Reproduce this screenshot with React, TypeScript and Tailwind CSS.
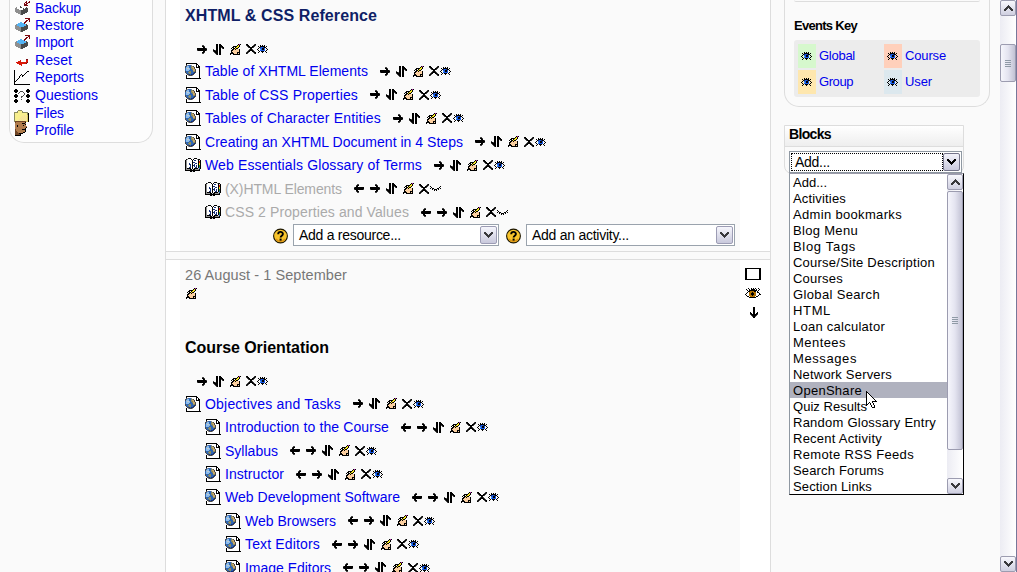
import { useLayoutEffect, useRef, useState } from "react";
import clsx from "clsx";

const PALETTE: Record<string, string> = {
  "#": "#000000",
  k: "#4a4a4a",
  g: "#8f8f8f",
  l: "#c4c8cc",
  w: "#ffffff",
  p: "#fbcfa0",
  o: "#c9a868",
  y: "#f6e420",
  m: "#c02ab8",
  b: "#2f66b4",
  B: "#1858e0",
  c: "#8cbce8",
  s: "#55b4f4",
  d: "#16307a",
  r: "#7c0810",
  R: "#d81808",
  G: "#1c9038",
  n: "#b07c4c",
  N: "#6e4424",
  Y: "#f8ef8e",
  t: "#d8c860",
  a: "#f4dca0",
  e: "#b07000",
  u: "#8a8c60",
};

const ART = {
  right: [
    ".....kk...",
    ".....##k..",
    "......##..",
    "#########k",
    "##########",
    "k########k",
    "......##..",
    ".....##k..",
    ".....kk...",
  ],
  left: [
    "...kk.....",
    "..k##.....",
    "..##......",
    "k#########",
    "##########",
    "k########k",
    "..##......",
    "..k##.....",
    "...kk.....",
  ],
  down: [
    "...##...",
    "...##...",
    "...##...",
    "...##...",
    "...##...",
    "#..##..#",
    "##.##.##",
    "k######k",
    ".k####k.",
    "..k##k..",
    "...##...",
  ],
  updown: [
    "...##.##...",
    "...##.###..",
    "...##.####.",
    "...##.##k##",
    "...##.##.k#",
    "k..##.##...",
    "##k##.##...",
    "k####.##...",
    ".k###.##...",
    "..k##.##...",
    "...k#.##...",
  ],
  edit: [
    "........#m#",
    ".......#y#.",
    "...####yy#.",
    "..##.#yy#..",
    ".#.##y##...",
    "..##p#ppp#.",
    ".##pppppp#.",
    ".#ppppppp#.",
    ".##pppp###.",
    "####ppp#p#.",
    "#..#######.",
  ],
  close: [
    "##......k#",
    "k##....k#k",
    ".k##..##k.",
    "..k####k..",
    "....##....",
    "...k##k...",
    "..k####k..",
    ".k##..##k.",
    "k#k....k##",
    "#k......k#",
  ],
  eye: [
    "...#.#.#...",
    ".#.#####.#.",
    "..#dBBd##..",
    ".#.BB##B.#.",
    "#..sB##B..#",
    ".#.BBBBB.#.",
    "..#.###.#..",
    ".#...#...#.",
  ],
  shut: [
    "#.........#",
    ".#.......#.",
    "#.##...##.#",
    "..#.###.#..",
    "....#.#....",
  ],
  doc: [
    ".###########....",
    ".#wwwwwwwww##...",
    ".kgbbbgwwww#w#..",
    "kbccbbuukww#w##.",
    "kcccbbuookw####.",
    "bcllcbuuokwwww#.",
    "bccccbbuookwww#.",
    "bcccbbbbookwww#.",
    "kbbbuubbuukwww#.",
    "kbbuuubbbdkwww#.",
    ".kbbuubbdkwwww#.",
    "..kkdbddkwwwww#.",
    ".#wgkkkgwwwwww#.",
    ".#wwwwwwwwwwww#.",
    ".#wwwwwwwwwwww#.",
    ".###############",
  ],
  book: [
    "...###...###....",
    ".#gwww#.#wwwg##.",
    "#gwwwww#wddww#l#",
    "#gwwwww#wwwww#R#",
    "#gwwwww#ddwww#R#",
    "#gwwdww#wwddw#y#",
    "#gwwddw#wdwww#y#",
    "#gwwwdw#ddwdw#G#",
    "#gwwwdw#wdwdw#G#",
    "#gwwddw#wwddw#b#",
    "#g####w#w####lb#",
    "#gggg##l##gggg#.",
    "###############.",
    ".....##l##......",
  ],
  big: [
    "...#..#.#.#..#..",
    ".#..#.####.#..#.",
    "..#.########.#..",
    "...##eeee##.#...",
    "..#weee#eeew##..",
    ".#wwee###eewww#.",
    "#wwwee###eewww##",
    ".#wweee#eeeww#..",
    "..##weeeeew##...",
    "....#######.....",
  ],
  backup: [
    "...........r..r",
    "..........rr.rr",
    ".........r.rr..",
    ".........rrr...",
    ".....ww..rrrr..",
    "...wwkwwww.....",
    ".gwwwkkwwwwk...",
    "ggwwwwwwkwkkk..",
    "ggggwwwwkkkkk..",
    "ggggggkkkkkkk..",
    "ggggggkkkkkkk..",
    ".gggggkkkkkk...",
    "...gggkkkk.....",
    ".....gkk.......",
  ],
  restore: [
    "..........rrrrr",
    ".............rr",
    "...........rr.r",
    "..........rr..r",
    ".....ss..rr....",
    "...ssssssr.....",
    ".gsssssssssk...",
    "ggssssssssskk..",
    "ggggssssskkkk..",
    "ggggggkkkkkkk..",
    "ggggggkkkkkkk..",
    ".gggggkkkkkk...",
    "...gggkkkk.....",
    ".....gkk.......",
  ],
  reset: [
    "..........rr",
    "....R.....RR",
    "..RRR.....RR",
    "RRRRRRRRRRRr",
    ".RRRRRRRRRr.",
    "...RRR......",
    ".....R......",
  ],
  reports: [
    "#...............",
    "#............##.",
    "#...........#...",
    "#..........#....",
    "#......#..#.....",
    "#.....#.##......",
    "#....#..#.......",
    "#....#..........",
    "#...#...........",
    "#..#............",
    "#.#.............",
    "##..............",
    "#...............",
    "#...............",
    "################",
  ],
  questions: [
    ".##..........##.",
    "####........####",
    "####..kkk...####",
    ".##..k...k...##.",
    "....k.....k.....",
    ".##.......k..##.",
    "####.....k..####",
    "####...kk...####",
    ".##....k.....##.",
    "................",
    ".##....k.....##.",
    "####........####",
    "####........####",
    ".##..........##.",
  ],
  files: [
    "....uuuu.......",
    "...uYYYYu......",
    "uuuuYYYYuuuuuu.",
    "uYYYYYYYYYYYYu#",
    "uYYYYYYYYYYYYu#",
    "uYYYYYYYYYaYYt#",
    "uYYYYYYYaYaYat#",
    "uYYYYYYaYaYaYt#",
    "uYYYYYaYaYaYat#",
    "uYYYYaYaYaYaYt#",
    "uYYYaYaYaYaYat#",
    "uttttttttttttt#",
  ],
  profile: [
    "NNNNNNNNNNN",
    "Nnnnnnnnnn#",
    "nnnnnnn###n",
    "nnnnnnnnnn#",
    "nn#nnnnn#nn",
    "nn#nnnnnnnnn",
    "nnnnnnnnnnn#",
    "nnnnnnnnnn#",
    "Nnnnnnn####",
    "Nnnnnnnnnn#",
    "NNnnnnnnnn#",
    "NNNnnnnn##.",
    "NNNN####...",
    "NNNNN#.....",
    "######.....",
  ],
  chevDown: ["##.....##", "###...###", ".###.###.", "..#####..", "...###...", "....#...."],
  chevUp: ["....#....", "...###...", "..#####..", ".###.###.", "###...###", "##.....##"],
  cursor: [
    "#..........",
    "##.........",
    "#w#........",
    "#ww#.......",
    "#www#......",
    "#wwww#.....",
    "#wwwww#....",
    "#wwwwww#...",
    "#wwwwwww#..",
    "#wwwwwwww#.",
    "#wwwww#####",
    "#ww#ww#....",
    "#w#.#ww#...",
    "##..#ww#...",
    "#....#ww#..",
    ".....#ww#..",
    "......###..",
  ],
} satisfies Record<string, string[]>;

type ArtName = keyof typeof ART;

function Pixel({ name, className }: { name: ArtName; className?: string }) {
  const rows = ART[name];
  const w = Math.max(...rows.map((r) => r.length));
  return (
    <svg
      width={w}
      height={rows.length}
      viewBox={`0 0 ${w} ${rows.length}`}
      shapeRendering="crispEdges"
      className={clsx("block shrink-0", className)}
      aria-hidden
    >
      {rows.flatMap((row, y) =>
        [...row].map((ch, x) =>
          PALETTE[ch] ? <rect key={`${x}-${y}`} x={x} y={y} width={1} height={1} fill={PALETTE[ch]} /> : null,
        ),
      )}
    </svg>
  );
}

/** Tracks a label in or out so that it fills the given width. */
function Fit({ text, w, className }: { text: string; w: number; className?: string }) {
  const ref = useRef<HTMLSpanElement>(null);
  const [spacing, setSpacing] = useState(0);
  useLayoutEffect(() => {
    if (ref.current) setSpacing((w - ref.current.getBoundingClientRect().width) / text.length);
  }, [text, w]);
  return (
    <span ref={ref} className={clsx("inline-block shrink-0 whitespace-pre", className)} style={{ letterSpacing: `${spacing}px` }}>
      {text}
    </span>
  );
}

function Actions({ back, hidden }: { back?: boolean; hidden?: boolean }) {
  return (
    <div className="flex items-center">
      {back && <Pixel name="left" className="mr-1.5" />}
      <Pixel name="right" className="mr-1.5" />
      <Pixel name="updown" className="mr-1.5" />
      <Pixel name="edit" className="mr-[5px]" />
      <Pixel name="close" className="mr-px" />
      <Pixel name={hidden ? "shut" : "eye"} />
    </div>
  );
}

type Item = { text: string; w: number; level?: number; icon?: ArtName; hidden?: boolean };

const REFERENCE: Item[] = [
  { text: "Table of XHTML Elements", w: 163 },
  { text: "Table of CSS Properties", w: 153 },
  { text: "Tables of Character Entities", w: 176 },
  { text: "Creating an XHTML Document in 4 Steps", w: 258 },
  { text: "Web Essentials Glossary of Terms", w: 217, icon: "book" },
  { text: "(X)HTML Elements", w: 117, level: 1, icon: "book", hidden: true },
  { text: "CSS 2 Properties and Values", w: 184, level: 1, icon: "book", hidden: true },
];

const ORIENTATION: Item[] = [
  { text: "Objectives and Tasks", w: 136 },
  { text: "Introduction to the Course", w: 164, level: 1 },
  { text: "Syllabus", w: 53, level: 1 },
  { text: "Instructor", w: 59, level: 1 },
  { text: "Web Development Software", w: 175, level: 1 },
  { text: "Web Browsers", w: 91, level: 2 },
  { text: "Text Editors", w: 75, level: 2 },
  { text: "Image Editors", w: 86, level: 2 },
];

function ItemRow({ item }: { item: Item }) {
  const level = item.level ?? 0;
  return (
    <li className={clsx("flex h-[23.45px] items-center", level === 1 && "pl-5", level === 2 && "pl-10")}>
      <div className="w-5 shrink-0">
        <Pixel name={item.icon ?? "doc"} />
      </div>
      <Fit text={item.text} w={item.w} className={clsx("mr-3 leading-[22px]", item.hidden ? "text-[#aaaaaa]" : "text-[#0000ee]")} />
      <Actions back={level > 0} hidden={item.hidden} />
    </li>
  );
}

function Help() {
  return (
    <svg width="15" height="16" viewBox="0 0 15 16" className="mt-1 shrink-0">
      <circle cx="7.5" cy="8" r="6.9" fill="#f8c42c" stroke="#1c1600" strokeWidth="1.1" />
      <path d="M3 11a5.6 5.6 0 0 0 9 0" fill="none" stroke="#dd9514" strokeWidth="1.4" />
      <path d="M5.2 6.2c0-3 4.7-3 4.7-.3 0 1.8-2.3 1.7-2.3 3.6" fill="none" stroke="#000" strokeWidth="1.9" />
      <rect x="6.6" y="10.6" width="2" height="2" fill="#000" />
    </svg>
  );
}

function AddSelect({ text, w, className }: { text: string; w: number; className: string }) {
  return (
    <div className={clsx("flex h-[22px] items-center border border-[#9aa3ad] bg-white pr-px pl-[5px]", className)}>
      <Fit text={text} w={w} className="mr-auto leading-[20px]" />
      <div className="flex h-[18px] w-[17px] items-center justify-center rounded-[2px] border border-[#9c9cb4] bg-linear-to-b from-[#f6f6fc] to-[#c9c9dc]">
        <Pixel name="chevDown" className="opacity-75" />
      </div>
    </div>
  );
}

const MENU: { text: string; w: number; icon: ArtName; cls: string }[] = [
  { text: "Backup", w: 46, icon: "backup", cls: "ml-[2px]" },
  { text: "Restore", w: 49, icon: "restore", cls: "ml-[2px]" },
  { text: "Import", w: 38, icon: "restore", cls: "ml-[2px]" },
  { text: "Reset", w: 37, icon: "reset", cls: "ml-[3px] mt-[5px]" },
  { text: "Reports", w: 49, icon: "reports", cls: "ml-px mt-px" },
  { text: "Questions", w: 63, icon: "questions", cls: "ml-px mt-px" },
  { text: "Files", w: 29, icon: "files", cls: "ml-px mt-[6px]" },
  { text: "Profile", w: 39, icon: "profile", cls: "ml-[2px] -mt-[3px]" },
];

const EVENTS = [
  { text: "Global", w: 36, bg: "bg-[#d6f8cd]" },
  { text: "Course", w: 41, bg: "bg-[#ffd0bb]" },
  { text: "Group", w: 34, bg: "bg-[#fee7ae]" },
  { text: "User", w: 27, bg: "bg-[#dce8ee]" },
];

const OPTIONS: [string, number][] = [
  ["Add...", 34],
  ["Activities", 53],
  ["Admin bookmarks", 109],
  ["Blog Menu", 65],
  ["Blog Tags", 63],
  ["Course/Site Description", 142],
  ["Courses", 50],
  ["Global Search", 87],
  ["HTML", 38],
  ["Loan calculator", 92],
  ["Mentees", 53],
  ["Messages", 64],
  ["Network Servers", 99],
  ["OpenShare", 69],
  ["Quiz Results", 74],
  ["Random Glossary Entry", 143],
  ["Recent Activity", 89],
  ["Remote RSS Feeds", 121],
  ["Search Forums", 91],
  ["Section Links", 79],
];

function ScrollButton({ up }: { up?: boolean }) {
  return (
    <div className="flex h-4 w-full shrink-0 items-center justify-center rounded-[2px] border border-[#9c9cb0] bg-linear-to-b from-[#f8f8fd] to-[#cfcfe0]">
      <Pixel name={up ? "chevUp" : "chevDown"} className="opacity-75" />
    </div>
  );
}

function Thumb({ className }: { className: string }) {
  return (
    <div
      className={clsx(
        "flex w-full shrink-0 flex-col items-center justify-center gap-px rounded-[2px] border border-[#9c9cb0] bg-linear-to-r from-[#f6f6fc] via-[#e4e4f0] to-[#c2c2d4]",
        className,
      )}
    >
      {[0, 1, 2, 3].map((i) => (
        <div key={i} className="h-px w-1.5 bg-[#8f9aa6]" />
      ))}
    </div>
  );
}

export default function App() {
  return (
    <div className="flex h-[572px] w-[1017px] overflow-hidden bg-[#fafafa] font-['Liberation_Sans',Arial,sans-serif] text-[14px] text-black">
      <aside className="w-[165px] shrink-0">
        <nav className="ml-[9px] h-[143px] w-[144px] rounded-b-[15px] border border-t-0 border-[#dddddd] bg-[#fdfdfd] pl-[3px]">
          <ul className="flex flex-col">
            {MENU.map((m, i) => (
              <li key={m.text} className={clsx("flex items-center", i === 0 ? "h-[15.9px]" : "h-[17.6px]")}>
                <div className="flex h-0 w-[22px] shrink-0 items-center">
                  <Pixel name={m.icon} className={m.cls} />
                </div>
                <Fit text={m.text} w={m.w} className="leading-[16px] text-[#0000ee]" />
              </li>
            ))}
          </ul>
        </nav>
      </aside>

      <main className="flex w-[606px] shrink-0 flex-col border-x border-[#dddddd]">
        <section className="flex h-[252px] shrink-0 border-b border-[#dddddd] bg-white pl-[14px]">
          <div className="w-[560px] bg-[#fafafa] pl-[5px]">
            <h2 className="h-[39px] text-[16px] leading-[31px] font-bold text-[#0f1f66]">
              <Fit text="XHTML & CSS Reference" w={192} />
            </h2>
            <div className="flex h-[20.7px] items-center pl-3">
              <Actions />
            </div>
            <ul className="h-[164.3px]">
              {REFERENCE.map((item) => (
                <ItemRow key={item.text} item={item} />
              ))}
            </ul>
            <div className="flex pl-[88px]">
              <Help />
              <AddSelect text="Add a resource..." w={102} className="mr-[7px] ml-[5px] w-[206px]" />
              <Help />
              <AddSelect text="Add an activity..." w={97} className="ml-[5px] w-[209px]" />
            </div>
          </div>
        </section>

        <section className="mt-[7px] flex h-[313px] shrink-0 border-t border-[#dddddd] bg-white pl-[14px]">
          <div className="w-[560px] bg-[#fafafa] pl-[5px]">
            <div className="h-[28px] text-[#777777] leading-[30px]">
              <Fit text="26 August - 1 September" w={162} className="text-[14.5px]" />
            </div>
            <Pixel name="edit" className="ml-px" />
            <h2 className="mt-[37px] h-[35px] text-[16px] leading-[24px] font-bold">
              <Fit text="Course Orientation" w={144} />
            </h2>
            <div className="mb-px flex h-[20px] items-center pl-3">
              <Actions />
            </div>
            <ul>
              {ORIENTATION.map((item) => (
                <ItemRow key={item.text} item={item} />
              ))}
            </ul>
          </div>
          <div className="flex flex-col items-start pt-2 pl-[5px]">
            <div className="h-3 w-4 border-2 border-y border-black bg-white" />
            <Pixel name="big" className="mt-2" />
            <Pixel name="down" className="mt-[9px] ml-[5px]" />
          </div>
        </section>
      </main>

      <aside className="w-[229px] shrink-0 pl-[13px]">
        <div className="h-[107px] w-[206px] rounded-b-[15px] border border-t-0 border-[#dddddd] px-[9px]">
          <div className="h-[2px] rounded-b-sm border-b border-[#dddddd]" />
          <h3 className="h-[38px] pt-[14px] text-[13px] leading-[20px] font-bold">
            <Fit text="Events Key" w={63} />
          </h3>
          <div className="grid h-[57px] grid-cols-[86px_86px] grid-rows-[24px_24px] gap-y-[2px] rounded-[3px] bg-[#ececec] pt-1 pl-1">
            {EVENTS.map((e) => (
              <div key={e.text} className="flex items-center">
                <div className={clsx("mr-[3px] flex h-6 w-[18px] items-center pl-[3px]", e.bg)}>
                  <Pixel name="eye" />
                </div>
                <Fit text={e.text} w={e.w} className="text-[13px] leading-6 text-[#0000ee]" />
              </div>
            ))}
          </div>
        </div>

        <div className="relative mt-[18px] h-[49px] w-[180px] rounded-b-lg border border-[#dddddd]">
          <h3 className="h-[21px] border-b border-[#dddddd] bg-linear-to-b from-white to-[#eeeeee] pl-[4px] leading-[17px] font-bold">
            <Fit text="Blocks" w={42} />
          </h3>
          <div className="mt-[4px] ml-[4px] flex h-[22px] w-[173px] border border-[#8f98a2] bg-white p-px">
            <div className="flex flex-1 items-center border border-dotted border-black pl-[3px]">
              <Fit text="Add..." w={35} className="leading-[18px]" />
            </div>
            <div className="flex w-[17px] items-center justify-center rounded-[2px] border border-[#74748a] bg-linear-to-b from-[#f2f2fa] to-[#c9c9dc]">
              <Pixel name="chevDown" />
            </div>
          </div>

          <div className="absolute top-[47px] left-[4px] flex h-[322px] w-[175px] border border-t-[#9a9aa8] border-r-black border-b-black border-l-[#8f98a2] bg-white">
            <ul className="w-[157px]">
              {OPTIONS.map(([text, w]) => (
                <li key={text} className={clsx("flex h-4 items-center pl-[3px] text-[13px]", text === "OpenShare" && "bg-[#b0b2bf]")}>
                  <Fit text={text} w={w} className="pt-0.5 leading-4" />
                </li>
              ))}
            </ul>
            <div className="flex w-4 flex-col bg-linear-to-r from-[#ececf3] to-white">
              <ScrollButton up />
              <Thumb className="mt-px mb-auto h-[259px]" />
              <ScrollButton />
            </div>
            <Pixel name="cursor" className="absolute top-[217px] left-[76px]" />
          </div>
        </div>
      </aside>

      <div className="flex w-[17px] shrink-0 flex-col border-r border-[#77779a] bg-linear-to-r from-[#ececf3] to-white">
        <ScrollButton up />
        <Thumb className="mt-7 mb-auto h-[38px]" />
        <ScrollButton />
      </div>
    </div>
  );
}
